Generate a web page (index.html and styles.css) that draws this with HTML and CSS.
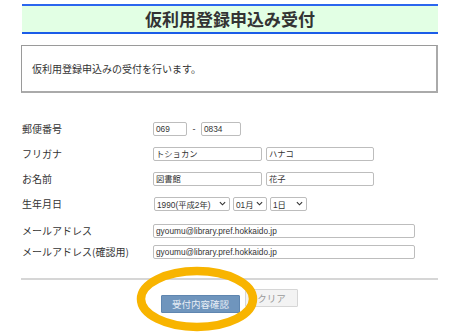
FILE: index.html
```html
<!DOCTYPE html>
<html lang="ja">
<head>
<meta charset="utf-8">
<link rel="stylesheet" href="styles.css">
</head>
<body>
<div class="page">
  <h1 class="title">仮利用登録申込み受付</h1>
  <div class="notice">仮利用登録申込みの受付を行います。</div>
  <div class="form">
    <div class="row">
      <div class="label">郵便番号</div>
      <div class="fields">
        <div class="input w-zip1">069</div>
        <span class="dash">-</span>
        <div class="input w-zip2">0834</div>
      </div>
    </div>
    <div class="row">
      <div class="label">フリガナ</div>
      <div class="fields gap4">
        <div class="input w-name1">トショカン</div>
        <div class="input w-name2">ハナコ</div>
      </div>
    </div>
    <div class="row">
      <div class="label">お名前</div>
      <div class="fields gap4">
        <div class="input w-name1">図書館</div>
        <div class="input w-name2">花子</div>
      </div>
    </div>
    <div class="row">
      <div class="label">生年月日</div>
      <div class="fields gap3">
        <div class="select w-year"><span>1990(平成2年)</span><svg class="chev" viewBox="0 0 8 5"><path d="M1 1l3 3 3-3" fill="none" stroke="#333" stroke-width="1.3"/></svg></div>
        <div class="select w-month"><span>01月</span><svg class="chev" viewBox="0 0 8 5"><path d="M1 1l3 3 3-3" fill="none" stroke="#333" stroke-width="1.3"/></svg></div>
        <div class="select w-day"><span>1日</span><svg class="chev" viewBox="0 0 8 5"><path d="M1 1l3 3 3-3" fill="none" stroke="#333" stroke-width="1.3"/></svg></div>
      </div>
    </div>
    <div class="row mail1">
      <div class="label">メールアドレス</div>
      <div class="fields">
        <div class="input w-mail">gyoumu@library.pref.hokkaido.jp</div>
      </div>
    </div>
    <div class="row mail2">
      <div class="label">メールアドレス(確認用)</div>
      <div class="fields">
        <div class="input w-mail">gyoumu@library.pref.hokkaido.jp</div>
      </div>
    </div>
  </div>
  <hr class="rule">
  <div class="buttons">
    <div class="btn-wrap">
      <button class="btn primary">受付内容確認</button>
      <svg class="ring" viewBox="0 0 130 74"><ellipse cx="65" cy="37" rx="56" ry="28" fill="none" stroke="#f8b400" stroke-width="8.5"/></svg>
    </div>
    <button class="btn secondary">クリア</button>
  </div>
</div>
</body>
</html>
```
FILE: styles.css
```css
* { box-sizing: border-box; }
html, body { margin: 0; padding: 0; background: #fff; }
body {
  width: 463px; height: 332px; overflow: hidden;
  font-family: "Noto Sans CJK JP", "Noto Sans", sans-serif;
  color: #333;
}
.page { margin-left: 21px; width: 417px; padding-top: 4px; }
.title {
  margin: 0 0 0 1px;
  height: 30px;
  background: #e2ffe4;
  border-top: 2px solid #2b66ee;
  border-bottom: 2px solid #1b5ce8;
  font-size: 17px;
  font-weight: bold;
  line-height: 26px;
  text-align: center;
  color: #333;
}
.notice {
  margin-top: 11px;
  height: 48px;
  border: 1px solid #9a9a9a;
  border-right: 2px solid #aaa;
  border-bottom: 2px solid #aaa;
  padding-left: 10px;
  display: flex; align-items: center;
  font-size: 10px;
  color: #333;
}
.form { margin-top: 28px; display: flex; flex-direction: column; gap: 11px; }
.row { display: grid; grid-template-columns: 132px 1fr; align-items: center; height: 14px; }
.row.mail1 { margin-top: 2px; }
.row.mail2 { margin-top: -4px; }
.label { padding-left: 1px; font-size: 10px; color: #333; white-space: nowrap; }
.fields { display: flex; align-items: center; }
.gap4 { gap: 4px; }
.gap3 { gap: 3px; }
.input {
  height: 14px;
  border: 1px solid #bdbdbd;
  border-radius: 2px;
  padding-left: 2px;
  font-family: "Liberation Sans", "Noto Sans CJK JP", sans-serif;
  font-size: 8.3px;
  line-height: 12px;
  color: #333;
  background: #fff;
  white-space: nowrap;
  overflow: hidden;
}
.dash { width: 14px; text-align: center; font-size: 9px; font-family: "Liberation Sans", sans-serif; }
.w-zip1 { width: 34px; }
.w-zip2 { width: 40px; }
.w-name1 { width: 109px; }
.w-name2 { width: 108px; }
.w-mail { width: 262px; }
.select {
  height: 14px;
  border: 1px solid #bdbdbd;
  border-radius: 2px;
  padding: 0 3px 0 2px;
  display: flex; align-items: center; justify-content: space-between;
  font-family: "Liberation Sans", "Noto Sans CJK JP", sans-serif;
  font-size: 8.3px;
  color: #333;
  white-space: nowrap;
}
.chev { width: 7px; height: 5px; }
.w-year { width: 76px; margin-left: 1px; }
.w-month { width: 34px; }
.w-day { width: 37px; }
.rule { margin: 20px 0 0 0; border: 0; border-top: 2px solid #d6d6d6; height: 0; }
.buttons { margin-top: 9px; display: flex; gap: 5px; padding-left: 140px; }
.btn-wrap { position: relative; }
.btn {
  height: 18px;
  font-family: "Noto Sans CJK JP", sans-serif;
  font-size: 9.5px;
  line-height: 16px;
  padding: 0;
  border-radius: 1px;
  margin: 0;
}
.primary { width: 79px; background: #6f95bd; border: 1px solid #5f86b0; color: #e8eef6; }
.secondary { width: 53px; background: #f3f3f3; border: 1px solid #d6d6d6; color: #9a9a9a; margin-top: 0; }
.ring { position: absolute; left: -29px; top: -27px; width: 130px; height: 74px; pointer-events: none; }
```
